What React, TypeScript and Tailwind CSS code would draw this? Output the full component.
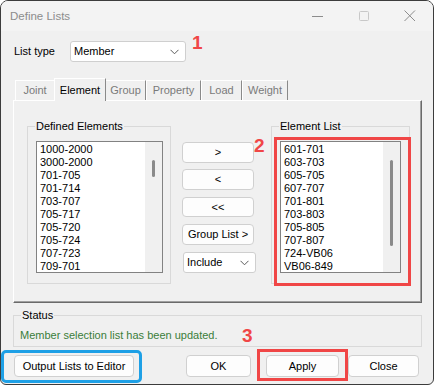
import React from "react";

const definedElements = [
  "1000-2000",
  "3000-2000",
  "701-705",
  "701-714",
  "703-707",
  "705-717",
  "705-720",
  "705-724",
  "707-723",
  "709-701",
];

const elementList = [
  "601-701",
  "603-703",
  "605-705",
  "607-707",
  "701-801",
  "703-803",
  "705-805",
  "707-807",
  "724-VB06",
  "VB06-849",
];

const tabs = [
  { label: "Joint", w: "w-[40px]" },
  { label: "Element", w: "w-[52px]", active: true },
  { label: "Group", w: "w-[41px]" },
  { label: "Property", w: "w-[55px]" },
  { label: "Load", w: "w-[41px]" },
  { label: "Weight", w: "w-[46px]" },
];

function Chevron() {
  return (
    <svg width="9" height="6" viewBox="0 0 9 6" className="shrink-0">
      <path d="M0.5 0.8 L4.5 4.8 L8.5 0.8" fill="none" stroke="#5a5a5a" strokeWidth="1" />
    </svg>
  );
}

function Dropdown({ value, className }: { value: string; className: string }) {
  return (
    <div
      className={`flex items-center justify-between rounded-[3px] border border-[#cfcfcf] bg-white pl-[3px] pr-[6px] ${className}`}
    >
      <span>{value}</span>
      <Chevron />
    </div>
  );
}

function Button({ label, className }: { label: string; className: string }) {
  return (
    <div
      className={`flex items-center justify-center rounded-[4px] border border-[#d0d0d0] bg-[#fdfdfd] ${className}`}
    >
      {label}
    </div>
  );
}

/** 带滚动条的列表框 */
function ListBox({
  items,
  className,
  thumb,
}: {
  items: string[];
  className: string;
  thumb: string;
}) {
  return (
    <div className={`flex border border-[#828282] bg-white ${className}`}>
      <div className="flex-1 overflow-hidden pl-[3px] pt-[1px] text-[11px] leading-[13px] text-black">
        {items.map((item) => (
          <div key={item}>{item}</div>
        ))}
      </div>
      <div className="flex w-[17px] justify-center bg-[#f0f0f0] pt-[18px]">
        <div className={`w-[3px] rounded-full bg-[#8a8a8a] ${thumb}`} />
      </div>
    </div>
  );
}

function GroupBox({
  label,
  className,
  children,
}: {
  label: string;
  className: string;
  children: React.ReactNode;
}) {
  return (
    <div className={`relative border border-[#d9d9d9] ${className}`}>
      <span className="absolute -top-[8px] left-[7px] bg-[#f0f0f0] px-[1px] leading-[14px]">
        {label}
      </span>
      {children}
    </div>
  );
}

export default function App() {
  return (
    <div
      className="relative h-[385px] w-[434px] overflow-hidden rounded-t-[8px] rounded-b-[6px] border border-[#3c3c3c] bg-[#f0f0f0] text-[11px] text-black"
      style={{ fontFamily: '"Liberation Sans", Arial, sans-serif' }}
    >
      {/* 标题栏 */}
      <div className="flex h-[30px] items-center bg-[#f3f3f3]">
        <span className="ml-[9px] mt-[1px] text-[11.5px] text-[#8c8c8c]">Define Lists</span>
        <div className="ml-auto flex items-center">
          <svg width="46" height="30" viewBox="0 0 46 30">
            <path d="M17 15.5 H28" stroke="#8c8c8c" strokeWidth="1" />
          </svg>
          <svg width="46" height="30" viewBox="0 0 46 30">
            <rect x="18.5" y="10.5" width="9" height="9" rx="1" fill="none" stroke="#c8c8c8" strokeWidth="1" />
          </svg>
          <svg width="46" height="30" viewBox="0 0 46 30">
            <path d="M17.5 9.5 L28 20 M28 9.5 L17.5 20" stroke="#8c8c8c" strokeWidth="1" />
          </svg>
        </div>
      </div>

      <div className="px-[12px]">
        {/* 列表类型 */}
        <div className="mt-[10px] flex h-[21px] items-center">
          <span className="ml-[1px] w-[56px]">List type</span>
          <Dropdown value="Member" className="h-[21px] w-[116px]" />
        </div>

        {/* 标签页 */}
        <div className="mt-[17px] flex h-[21px] items-end pl-[2px]">
          {tabs.map((tab) =>
            tab.active ? (
              <div
                key={tab.label}
                className={`relative z-10 -mx-[1px] -mb-[1px] flex h-[23px] items-center justify-center border-l border-r border-t border-l-white border-r-[#8a8a8a] border-t-white bg-[#f0f0f0] ${tab.w}`}
              >
                {tab.label}
              </div>
            ) : (
              <div
                key={tab.label}
                className={`flex h-[20px] items-center justify-center border-l border-r border-t border-l-white border-r-[#8a8a8a] border-t-white text-[#7a7a7a] ${tab.w}`}
              >
                {tab.label}
              </div>
            ),
          )}
        </div>

        <div className="flex h-[203px] w-[409px] border-l border-t border-l-white border-t-white border-r border-b border-r-[#6a6a6a] border-b-[#6a6a6a] pl-[13px] pt-[25px] shadow-[inset_-1px_-1px_0_#a0a0a0]">
          <GroupBox label="Defined Elements" className="h-[158px] w-[144px] pl-[8px] pt-[14px]">
            <ListBox items={definedElements} className="h-[132px] w-[127px]" thumb="h-[17px]" />
          </GroupBox>

          <div className="ml-[11px] flex w-[75px] flex-col pt-[16px]">
            <Button label=">" className="h-[21px] w-[72px]" />
            <Button label="<" className="mt-[6px] h-[21px] w-[72px]" />
            <Button label="<<" className="mt-[7px] h-[20px] w-[72px]" />
            <Button label="Group List >" className="mt-[7px] h-[21px] w-[72px]" />
            <Dropdown value="Include" className="ml-[1px] mt-[7px] h-[21px] w-[73px]" />
          </div>

          <GroupBox label="Element List" className="ml-[14px] h-[158px] w-[139px] pl-[8px] pt-[14px]">
            <ListBox items={elementList} className="h-[132px] w-[121px]" thumb="h-[86px]" />
          </GroupBox>
        </div>

        {/* 状态 */}
        <GroupBox label="Status" className="mt-[12px] h-[32px] w-[409px]">
          <div className="pl-[6px] pt-[12px] leading-[14px] text-[#3a7d3a]">
            Member selection list has been updated.
          </div>
        </GroupBox>

        {/* 底部按钮 */}
        <div className="mt-[8px] flex h-[22px]">
          <Button label="Output Lists to Editor" className="ml-[1px] h-[22px] w-[120px]" />
          <Button label="OK" className="ml-[52px] h-[22px] w-[65px]" />
          <Button label="Apply" className="ml-[15px] h-[22px] w-[73px]" />
          <Button label="Close" className="ml-[9px] h-[22px] w-[71px]" />
        </div>
      </div>

      {/* 标注 */}
      <span className="absolute left-[191px] top-[31px] text-[19px] font-bold leading-[22px] text-[#f04646]">1</span>
      <span className="absolute left-[253px] top-[134px] text-[19px] font-bold leading-[22px] text-[#f04646]">2</span>
      <span className="absolute left-[241px] top-[324px] text-[19px] font-bold leading-[22px] text-[#f04646]">3</span>
      <div className="pointer-events-none absolute left-[273px] top-[136px] h-[149px] w-[137px] border-[3px] border-[#f04646]" />
      <div className="pointer-events-none absolute left-[256px] top-[348px] h-[32px] w-[91px] border-[3px] border-[#f04646]" />
      <div className="pointer-events-none absolute left-[0px] top-[349px] h-[33px] w-[141px] rounded-[5px] border-[3px] border-[#1ea0e6]" />
    </div>
  );
}
